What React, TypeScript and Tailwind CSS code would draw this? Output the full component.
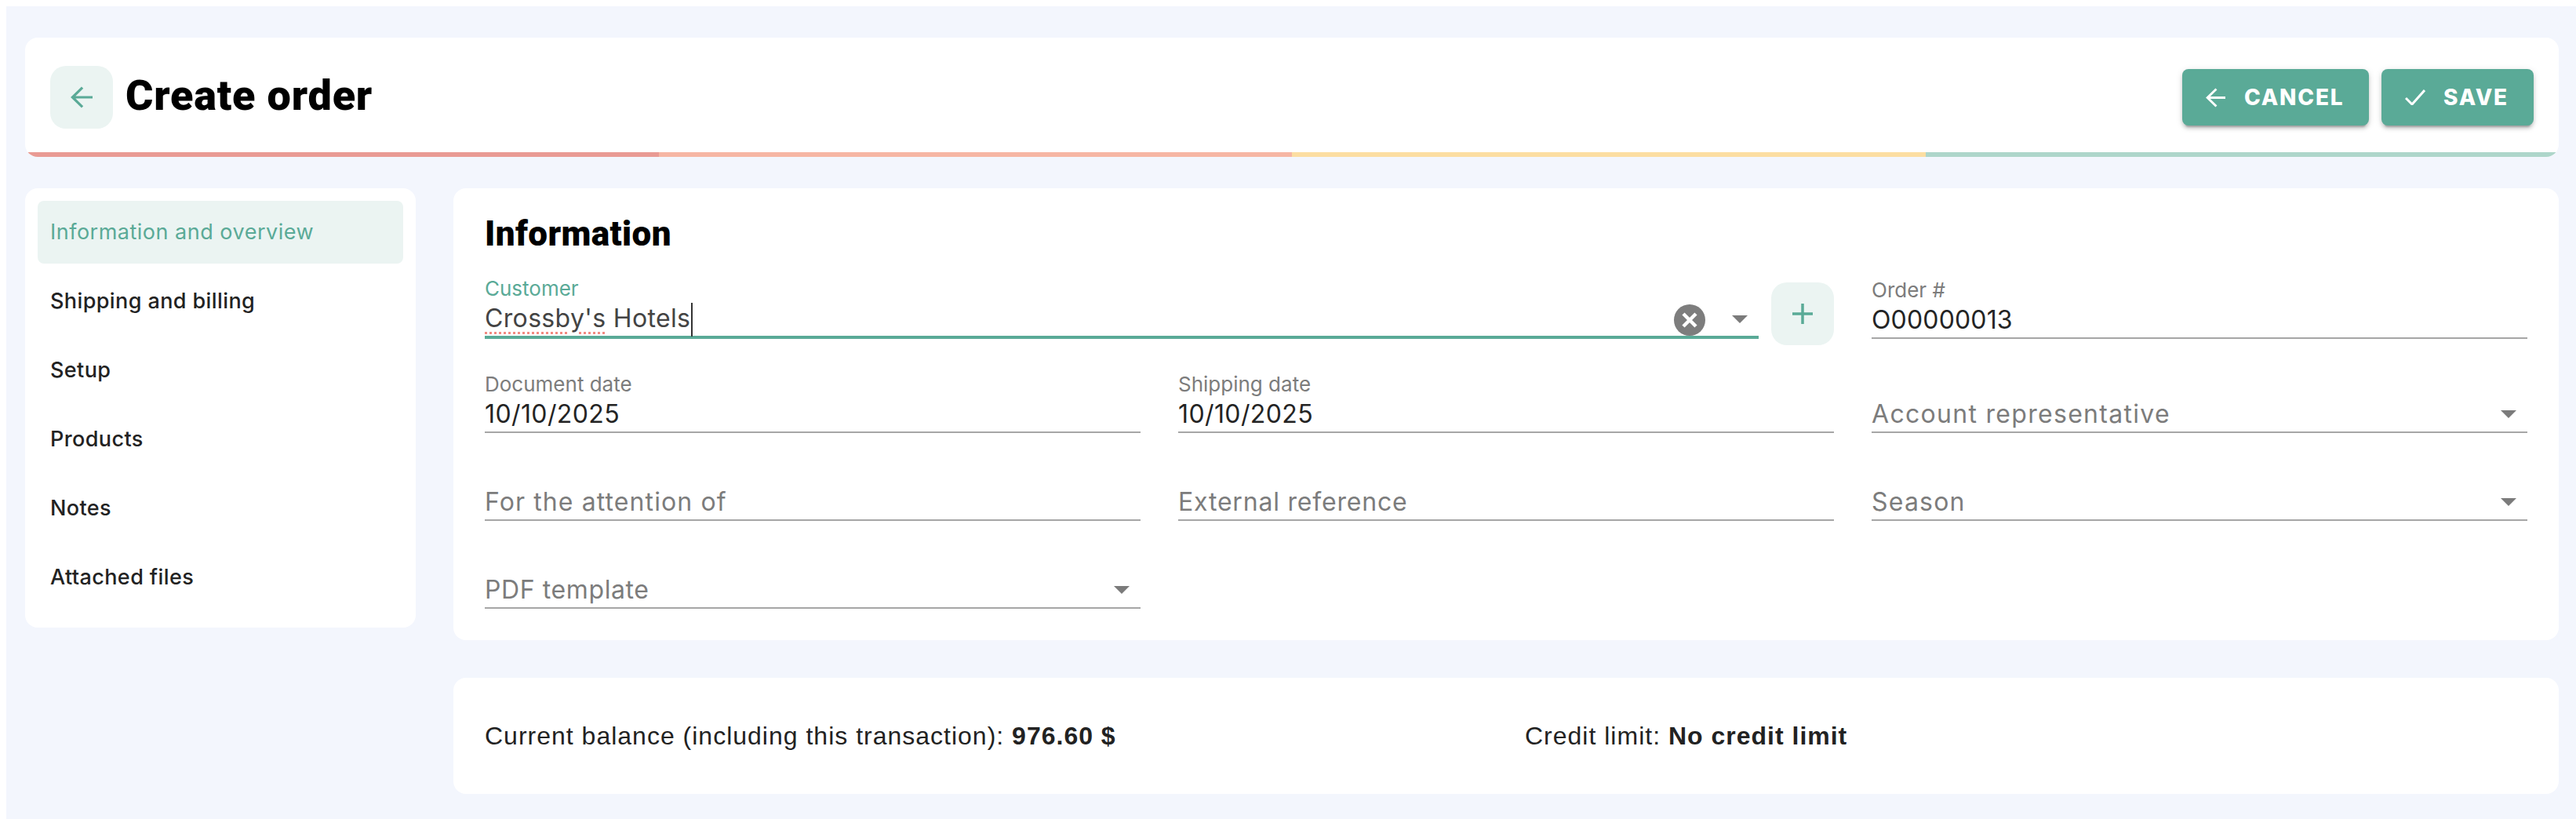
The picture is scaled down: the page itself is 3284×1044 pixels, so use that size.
import React from "react";

const Arrow = ({ className = "" }: { className?: string }) => (
  <svg viewBox="0 0 26 26" className={className} fill="none" stroke="currentColor" strokeWidth="3">
    <path d="M26 13H2M14 1.5 2.2 13 14 24.5" />
  </svg>
);

const Caret = () => (
  <svg viewBox="0 0 20 10" className="w-[20px] h-[10px] shrink-0 text-[#7b7b7b]" fill="currentColor">
    <path d="M0 0h20L10 10z" />
  </svg>
);

function Field({
  label,
  value,
  placeholder,
  select,
  tracking = "tracking-[0.6px]",
}: {
  label?: string;
  value?: string;
  placeholder?: string;
  select?: boolean;
  tracking?: string;
}) {
  return (
    <div className="flex flex-col justify-end min-w-0">
      {label && <div className="h-[32px] leading-[32px] text-[26px] text-[#7c7c7c]">{label}</div>}
      <div className="h-[44px] flex items-center border-b-2 border-[#a6a6a6] box-content">
        <span className={`flex-1 text-[32px] leading-[44px] ${tracking} ${value ? "text-[#242424]" : "text-[#7c7c7c]"}`}>
          {value || placeholder}
        </span>
        {select && <span className="mr-[14px]"><Caret /></span>}
      </div>
    </div>
  );
}

const NAV = ["Shipping and billing", "Setup", "Products", "Notes", "Attached files"];

export default function App() {
  return (
    <div className="w-[3284px] h-[1044px] bg-white pt-2 pl-2 overflow-hidden font-['Inter',sans-serif]">
      <div className="h-full bg-[#f3f6fd] pt-10 pl-6 pr-[22px]">
        <header className="h-[152px] bg-white rounded-[16px] overflow-hidden flex flex-col">
          <div className="flex-1 flex items-center justify-between pl-8 pr-8 pt-[6px]">
            <div className="flex items-center gap-4">
              <button className="w-[80px] h-[80px] rounded-[20px] bg-[#ebf4f2] text-[#5aaa97] flex items-center justify-center">
                <Arrow className="w-[28px] h-[28px]" />
              </button>
              <h1 className="font-['Roboto',sans-serif] font-black text-[54px] leading-[60px] tracking-[0.8px] text-black pb-[4px]">Create order</h1>
            </div>
            <div className="flex gap-4">
              <button className="w-[238px] h-[72px] rounded-[8px] bg-[#5aaa97] text-white flex items-center pl-[30px] gap-[24px] shadow-[0_6px_2px_-4px_rgba(0,0,0,0.2),0_4px_4px_0_rgba(0,0,0,0.14),0_2px_10px_0_rgba(0,0,0,0.12)]">
                <Arrow className="w-[25px] h-[25px]" />
                <span className="text-[28px] font-extrabold tracking-[1.8px]">CANCEL</span>
              </button>
              <button className="w-[194px] h-[72px] rounded-[8px] bg-[#5aaa97] text-white flex items-center pl-[30px] gap-[23px] shadow-[0_6px_2px_-4px_rgba(0,0,0,0.2),0_4px_4px_0_rgba(0,0,0,0.14),0_2px_10px_0_rgba(0,0,0,0.12)]">
                <svg viewBox="0 0 26 20" className="w-[26px] h-[20px]" fill="none" stroke="currentColor" strokeWidth="3">
                  <path d="M1 11l8 8L25 1" />
                </svg>
                <span className="text-[28px] font-extrabold tracking-[1.8px]">SAVE</span>
              </button>
            </div>
          </div>
          <div className="flex h-[6px]">
            <div className="flex-1 bg-[#e99b94]" />
            <div className="flex-1 bg-[#f6b6a4]" />
            <div className="flex-1 bg-[#fcdea2]" />
            <div className="flex-1 bg-[#aed6ca]" />
          </div>
        </header>

        <div className="flex gap-12 mt-10 items-start">
          <nav className="w-[498px] shrink-0 bg-white rounded-[16px] pt-4 px-4 pb-6 flex flex-col gap-2 text-[27px] leading-[36px] tracking-[0.4px] font-medium">
            <div className="h-[80px] rounded-[8px] bg-[#ebf4f2] text-[#5aaa97] font-normal tracking-[0.5px] flex items-center px-4">Information and overview</div>
            {NAV.map((n) => (
              <div key={n} className="h-[80px] text-[#222222] flex items-center px-4">{n}</div>
            ))}
          </nav>

          <main className="flex-1 min-w-0">
            <section className="bg-white rounded-[16px] pt-8 pb-10 px-10">
              <h2 className="font-['Roboto',sans-serif] font-black text-[44px] leading-[52px] tracking-[0.4px] text-black">Information</h2>

              <div className="grid grid-cols-3 gap-x-12 h-[108px] items-end">
                <div className="col-span-2 flex items-end gap-4">
                  <div className="flex-1 min-w-0">
                    <div className="h-[32px] leading-[32px] text-[26px] text-[#5aaa97]">Customer</div>
                    <div className="h-[44px] box-content border-b-4 border-[#5aaa97] flex items-center">
                      <span className="text-[32px] leading-[44px] tracking-[0.35px] text-[#444444]">
                        <span className="underline decoration-dotted decoration-[#f28b82] decoration-[3px] underline-offset-[6px]">Crossby's</span> Hotels
                      </span>
                      <span className="w-[2px] h-[43px] bg-[#333333] ml-[1px] mt-[2px]" />
                      <span className="flex-1" />
                      <svg viewBox="0 0 40 40" className="w-[40px] h-[40px] mr-[34px] mt-[4px]">
                        <circle cx="20" cy="20" r="20" fill="#7d7d7d" />
                        <path d="M12 12l16 16M28 12 12 28" stroke="#fff" strokeWidth="4.5" fill="none" />
                      </svg>
                      <span className="mr-[14px] mt-[2px]"><Caret /></span>
                    </div>
                  </div>
                  <button className="w-[80px] h-[80px] shrink-0 rounded-[20px] bg-[#ebf4f2] text-[#5aaa97] flex items-center justify-center mb-[-8px]">
                    <svg viewBox="0 0 26 26" className="w-[26px] h-[26px]" fill="none" stroke="currentColor" strokeWidth="3.5">
                      <path d="M0 13h26M13 0v26" />
                    </svg>
                  </button>
                </div>
                <Field label="Order #" value="O00000013" tracking="tracking-[0.15px]" />
              </div>

              <div className="grid grid-cols-3 gap-x-12 h-[120px] items-end">
                <Field label="Document date" value="10/10/2025" tracking="tracking-[0.4px]" />
                <Field label="Shipping date" value="10/10/2025" tracking="tracking-[0.4px]" />
                <Field placeholder="Account representative" select tracking="tracking-[1.3px]" />
              </div>

              <div className="grid grid-cols-3 gap-x-12 h-[112px] items-end">
                <Field placeholder="For the attention of" tracking="tracking-[1.1px]" />
                <Field placeholder="External reference" tracking="tracking-[0.8px]" />
                <Field placeholder="Season" select tracking="tracking-[1.2px]" />
              </div>

              <div className="grid grid-cols-3 gap-x-12 h-[112px] items-end">
                <Field placeholder="PDF template" select />
              </div>
            </section>

            <section className="mt-12 h-[148px] bg-white rounded-[16px] px-10 grid grid-cols-2 gap-x-12 items-center font-['Liberation_Sans',sans-serif] text-[32px] text-[#222222] tracking-[1px]">
              <div>Current balance (including this transaction): <b className="font-bold">976.60 $</b></div>
              <div>Credit limit: <b className="font-bold">No credit limit</b></div>
            </section>
          </main>
        </div>
      </div>
    </div>
  );
}
